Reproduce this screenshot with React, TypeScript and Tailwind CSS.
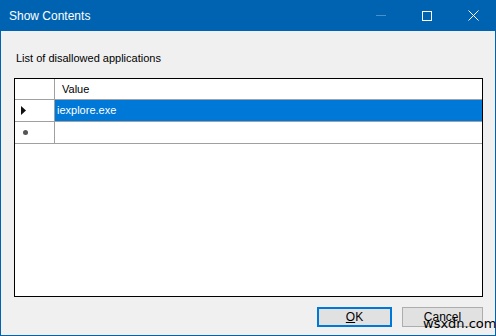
import React from 'react';

const font = { fontFamily: '"Liberation Sans", Arial, sans-serif' };

export default function App() {
  return (
    <div className="w-[496px] h-[336px] bg-[#0063b1] flex flex-col text-[11px] text-black relative" style={font}>
      {/* Title bar */}
      <div className="h-[31px] flex items-center text-white text-[12px] shrink-0">
        <span className="pl-[9px] flex-1">Show Contents</span>
        <div className="w-[46px] h-full flex items-center justify-center">
          <div className="w-[10px] h-px bg-[#4d8fca]" />
        </div>
        <div className="w-[46px] h-full flex items-center justify-center">
          <div className="w-[10px] h-[10px] border border-white" />
        </div>
        <div className="w-[46px] h-full flex items-center justify-center">
          <svg width="11" height="11" viewBox="0 0 11 11">
            <path d="M0.5 0.5 L10.5 10.5 M10.5 0.5 L0.5 10.5" stroke="white" strokeWidth="1" />
          </svg>
        </div>
      </div>

      {/* Body */}
      <div className="flex-1 mx-px mb-px bg-[#f0f0f0] flex flex-col pl-[13px] pr-[12px]">
        <div className="h-[47px] pt-[19px] pl-[2px]">List of disallowed applications</div>

        {/* Grid */}
        <div className="h-[219px] border border-black bg-white flex flex-col">
          <div className="flex h-[21px] border-b border-[#a0a0a0]">
            <div className="w-[40px] border-r border-[#a0a0a0]" />
            <div className="flex-1 flex items-center pl-[7px]">Value</div>
          </div>
          <div className="flex h-[22px] border-b border-[#a0a0a0]">
            <div className="w-[40px] border-r border-[#a0a0a0] flex items-center pl-[6px]">
              <svg width="5" height="9" viewBox="0 0 5 9">
                <path d="M0 0 L5 4.5 L0 9 Z" fill="#111" />
              </svg>
            </div>
            <div className="flex-1 bg-[#0078d7] text-white flex items-center pl-[2px]">iexplore.exe</div>
          </div>
          <div className="flex h-[22px] border-b border-[#a0a0a0]">
            <div className="w-[40px] border-r border-[#a0a0a0] flex items-center pl-[8px]">
              <div className="w-[5px] h-[5px] rounded-full bg-[#555]" />
            </div>
            <div className="flex-1" />
          </div>
          <div className="flex-1" />
        </div>

        {/* Buttons */}
        <div className="flex justify-end gap-[10px] mt-[10px]">
          <button className="w-[75px] h-[20px] border-2 border-[#0078d7] bg-[#e1e1e1] flex items-center justify-center leading-none text-[12px]">
            <span><u>O</u>K</span>
          </button>
          <button className="w-[81px] h-[20px] border border-[#adadad] bg-[#e1e1e1] flex items-center justify-center leading-none text-[12px]">
            Cancel
          </button>
        </div>
      </div>

      {/* watermark */}
      <span className="absolute left-[423px] top-[317px] text-[13px] text-black leading-none" style={{ fontFamily: '"DejaVu Sans", sans-serif' }}>
        wsxdn.com
      </span>
    </div>
  );
}
